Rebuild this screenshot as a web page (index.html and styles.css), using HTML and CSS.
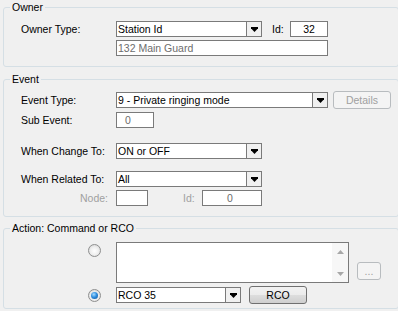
FILE: index.html
```html
<!DOCTYPE html>
<html>
<head>
<meta charset="utf-8">
<link rel="stylesheet" href="styles.css">
</head>
<body>
<div class="page">
  <fieldset class="group owner">
    <legend>Owner</legend>
    <div class="row r-owner">
      <span class="lbl">Owner Type:</span>
      <div class="combo w146"><span class="val">Station Id</span><span class="drop"><svg width="7" height="5" viewBox="0 0 7 5"><path d="M0 0H7V1.2L3.5 5L0 1.2Z" fill="#000"/></svg></span></div>
      <span class="lbl-id">Id:</span>
      <div class="field w38 center">32</div>
    </div>
    <div class="row r-guard">
      <span class="lbl"></span>
      <div class="field w212 dim">132 Main Guard</div>
    </div>
  </fieldset>

  <fieldset class="group event">
    <legend>Event</legend>
    <div class="row r-etype">
      <span class="lbl">Event Type:</span>
      <div class="combo w212"><span class="val">9 - Private ringing mode</span><span class="drop"><svg width="7" height="5" viewBox="0 0 7 5"><path d="M0 0H7V1.2L3.5 5L0 1.2Z" fill="#000"/></svg></span></div>
      <div class="btn disabled details">Details</div>
    </div>
    <div class="row r-sub">
      <span class="lbl">Sub Event:</span>
      <div class="field w38 dim pad-sub">0</div>
    </div>
    <div class="row r-change">
      <span class="lbl">When Change To:</span>
      <div class="combo w146"><span class="val">ON or OFF</span><span class="drop"><svg width="7" height="5" viewBox="0 0 7 5"><path d="M0 0H7V1.2L3.5 5L0 1.2Z" fill="#000"/></svg></span></div>
    </div>
    <div class="row r-related">
      <span class="lbl">When Related To:</span>
      <div class="combo w146"><span class="val">All</span><span class="drop"><svg width="7" height="5" viewBox="0 0 7 5"><path d="M0 0H7V1.2L3.5 5L0 1.2Z" fill="#000"/></svg></span></div>
    </div>
    <div class="row r-node">
      <span class="lbl gray right">Node:</span>
      <div class="field w32"></div>
      <span class="lbl-id gray node-id">Id:</span>
      <div class="field w60 dim pad-id">0</div>
    </div>
  </fieldset>

  <fieldset class="group action">
    <legend>Action: Command or RCO</legend>
    <div class="row r-text">
      <span class="radio-cell top"><span class="radio"></span></span>
      <div class="textarea">
        <div class="ta-body"></div>
        <div class="scroll">
          <span class="sbtn"><svg width="7" height="4" viewBox="0 0 7 4"><path d="M0 4L3.5 0L7 4Z" fill="#a8a8a8"/></svg></span>
          <span class="sbtn"><svg width="7" height="4" viewBox="0 0 7 4"><path d="M0 0L3.5 4L7 0Z" fill="#a8a8a8"/></svg></span>
        </div>
      </div>
      <div class="btn disabled dots">...</div>
    </div>
    <div class="row r-rco">
      <span class="radio-cell"><span class="radio on"></span></span>
      <div class="combo w125"><span class="val">RCO 35</span><span class="drop"><svg width="7" height="5" viewBox="0 0 7 5"><path d="M0 0H7V1.2L3.5 5L0 1.2Z" fill="#000"/></svg></span></div>
      <div class="btn rco">RCO</div>
    </div>
  </fieldset>
</div>
</body>
</html>
```

FILE: styles.css
```css
html, body {
  margin: 0;
  padding: 0;
  background: #f0f0f0;
  overflow: hidden;
}
body {
  width: 398px;
  height: 311px;
  font-family: "Liberation Sans", Arial, sans-serif;
  font-size: 10.5px;
  font-weight: normal;
  color: #000;
}
.page {
  display: flex;
  flex-direction: column;
  padding-top: 1px;
}
.group {
  margin: 0 0 0 3px;
  width: 396px;
  box-sizing: border-box;
  border: 1px solid #d5dfe5;
  border-radius: 3px;
  padding: 0 0 10px 6px;
  min-inline-size: 0;
}
.group legend {
  padding: 0 2px;
  line-height: 12px;
  height: 12px;
  font-size: 10.5px;
  font-weight: normal;
  color: #000;
}
.event { margin-top: 6px; }
.action { margin-top: 5px; padding-bottom: 4px; }

.row {
  display: flex;
  align-items: center;
  padding-left: 11px;
}
.lbl {
  flex: none;
  width: 95px;
  white-space: nowrap;
  line-height: 14px;
}
.lbl.right {
  text-align: right;
  width: 87px;
  padding-right: 8px;
}
.gray { color: #a0a0a0; }
.lbl-id {
  flex: none;
  width: 18px;
  margin-left: 10px;
  line-height: 14px;
}
.node-id { margin-left: 35px; width: 19px; }

.r-owner { margin-top: 8px; }
.r-guard { margin-top: 3px; }
.r-etype { margin-top: 6px; }
.r-sub { margin-top: 3px; }
.r-change { margin-top: 15px; }
.r-related { margin-top: 12px; }
.r-node { margin-top: 3px; }
.r-text { margin-top: 8px; align-items: stretch; }
.r-rco { margin-top: 3px; }

.field, .combo {
  flex: none;
  box-sizing: border-box;
  height: 16px;
  border: 1px solid #7a7a7a;
  background: #fff;
  line-height: 14px;
  white-space: nowrap;
  overflow: hidden;
}
.field { padding-left: 1px; }
.field.center { text-align: center; padding-left: 0; }
.dim { color: #6d6d6d; }
.pad-sub { padding-left: 8px; }
.pad-id { padding-left: 24px; }
.w32 { width: 32px; }
.w38 { width: 38px; }
.w60 { width: 60px; }
.w125 { width: 125px; }
.w146 { width: 146px; }
.w212 { width: 212px; }

.combo {
  display: flex;
}
.combo .val {
  flex: 1;
  padding-left: 1px;
  overflow: hidden;
}
.combo .drop {
  flex: none;
  width: 14px;
  border-left: 1px solid #7a7a7a;
  background: #f0f0f0;
  display: flex;
  align-items: center;
  justify-content: center;
}
.combo .drop svg { display: block; }

.btn {
  flex: none;
  box-sizing: border-box;
  height: 18px;
  width: 58px;
  border-radius: 3px;
  text-align: center;
  line-height: 16px;
}
.btn.disabled {
  border: 1px solid #b8bcbf;
  background: #f4f4f4;
  color: #a0a0a0;
}
.details { margin-left: 5px; }
.dots {
  width: 24px;
  margin-left: 8px;
  align-self: flex-end;
  margin-bottom: 3px;
}
.rco {
  margin-left: 8px;
  border: 1px solid #707070;
  background: linear-gradient(#f2f2f2 0%, #ebebeb 50%, #dddddd 51%, #cfcfcf 100%);
}

.radio-cell {
  flex: none;
  width: 80px;
  padding-right: 15px;
  display: flex;
  justify-content: flex-end;
}
.radio-cell.top { align-items: flex-start; padding-top: 2px; }
.radio {
  box-sizing: border-box;
  width: 13px;
  height: 13px;
  border-radius: 50%;
  border: 1px solid #8e8f8f;
  background: radial-gradient(circle at 50% 55%, #ffffff 0%, #f0f0f0 45%, #cfcfcf 100%);
  display: flex;
  align-items: center;
  justify-content: center;
}
.radio.on::after {
  content: "";
  width: 7px;
  height: 7px;
  border-radius: 50%;
  background: radial-gradient(circle at 40% 35%, #a6dcff 0%, #2f8ee0 45%, #0c4f94 100%);
}

.textarea {
  flex: none;
  box-sizing: border-box;
  width: 233px;
  height: 41px;
  border: 1px solid #7a7a7a;
  background: #fff;
  display: flex;
}
.ta-body { flex: 1; }
.scroll {
  flex: none;
  width: 16px;
  background: #f7f7f7;
  display: flex;
  flex-direction: column;
  justify-content: space-between;
}
.sbtn {
  height: 17px;
  display: flex;
  align-items: center;
  justify-content: center;
}
.sbtn svg { display: block; }
```
